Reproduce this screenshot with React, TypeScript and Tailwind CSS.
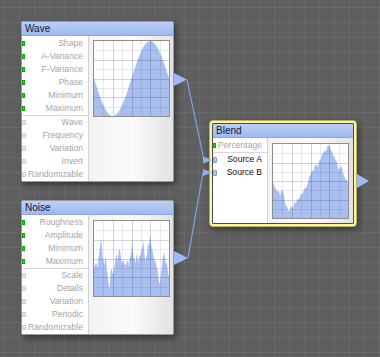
import React from "react";

type Pt = [number, number];

function Chart({ pts, h = 77 }: { pts: Pt[]; h?: number }) {
  const W = 75;
  const H = h - 2;
  const d =
    `M0,${H} ` +
    pts.map(([x, y]) => `L${(x * W).toFixed(2)},${(y * H).toFixed(2)}`).join(" ") +
    ` L${W},${H} Z`;
  const lines: React.ReactNode[] = [];
  for (let i = 1; i < 8; i++) {
    const major = i % 2 === 0;
    const c = major ? "rgba(40,50,80,0.22)" : "rgba(40,50,80,0.1)";
    const x = Math.round((i * W) / 8) + 0.5;
    const y = Math.round((i * H) / 8) + 0.5;
    lines.push(<line key={"v" + i} x1={x} y1={0} x2={x} y2={H} stroke={c} strokeWidth={1} />);
    lines.push(<line key={"h" + i} x1={0} y1={y} x2={W} y2={y} stroke={c} strokeWidth={1} />);
  }
  return (
    <div className="border border-[#8e8e8e] bg-white w-[77px]" style={{ height: h }}>
      <svg width={W} height={H} className="block">
        <path d={d} fill="#a9bff0" />
        {lines}
      </svg>
    </div>
  );
}

function Conn({ kind }: { kind: "green" | "gray" | "blue" }) {
  if (kind === "green")
    return <div className="w-[3px] h-[5px] bg-[#14d814] shadow-[inset_0_0_0_0.5px_#0a8a0a] shrink-0" />;
  if (kind === "blue")
    return <div className="w-[4px] h-[6px] rounded-[1px] bg-[#b9c8e4] border border-[#8899bb] shrink-0" />;
  return <div className="w-[4px] h-[5px] rounded-[1px] bg-[#f0f0f0] border border-[#c4c4c4] shrink-0" />;
}

function Row({ label, kind, dark }: { label: string; kind: "green" | "gray" | "blue"; dark?: boolean }) {
  return (
    <div className="h-[13px] flex items-center pr-[5px]">
      <Conn kind={kind} />
      <span className={"ml-auto text-[8.6px] leading-none " + (dark ? "text-[#111111]" : "text-[#a6a6a6]")}>
        {label}
      </span>
    </div>
  );
}

function Title({ text }: { text: string }) {
  return (
    <div className="h-[14px] flex items-center pl-[3px] bg-gradient-to-b from-[#bccff6] to-[#9fb8ef] border-b border-[#8fa6d8] text-[10px] leading-none text-[#0f1736]">
      {text}
    </div>
  );
}

function GenNode({
  title,
  g1,
  g2,
  pts,
  chartPad,
  cls,
}: {
  title: string;
  g1: string[];
  g2: string[];
  pts: Pt[];
  chartPad: string;
  cls: string;
}) {
  return (
    <div
      className={
        "absolute w-[153px] border border-[#9c9c9c] rounded-[2px] overflow-hidden bg-white shadow-[2px_3px_6px_rgba(0,0,0,0.45)] " +
        cls
      }
    >
      <Title text={title} />
      <div className="flex">
        <div className="w-[67px] border-r border-[#d2d2d2] bg-white">
          <div className="pt-[1px] border-b border-[#d8d8d8]">
            {g1.map((l) => (
              <Row key={l} label={l} kind="green" />
            ))}
          </div>
          <div>
            {g2.map((l) => (
              <Row key={l} label={l} kind="gray" />
            ))}
          </div>
        </div>
        <div className={"flex-1 pl-[4px] bg-gradient-to-r from-[#f3f3f3] via-[#fbfbfb] to-[#e2e2e2] " + chartPad}>
          <Chart pts={pts} />
        </div>
      </div>
    </div>
  );
}

const wavePts: Pt[] = Array.from({ length: 151 }, (_, i) => {
  const x = i / 150;
  return [x, 0.5 + 0.5 * Math.sin(2 * Math.PI * x)];
});

function fromZoom(arr: number[][], x0: number, w: number, y0: number, h: number, jitter: number): Pt[] {
  const out: Pt[] = [];
  let seed = 7;
  const rnd = () => {
    seed = (seed * 9301 + 49297) % 233280;
    return seed / 233280;
  };
  for (let i = 0; i < arr.length; i++) {
    const [zx, zy] = arr[i];
    out.push([(zx - x0) / w, Math.min(1, Math.max(0, (zy - y0) / h))]);
    if (i < arr.length - 1 && jitter > 0) {
      const [nx, ny] = arr[i + 1];
      const mx = (zx + nx) / 2;
      const my = (zy + ny) / 2 + (rnd() - 0.5) * jitter;
      out.push([(mx - x0) / w, Math.min(1, Math.max(0, (my - y0) / h))]);
    }
  }
  return out;
}

const noiseRaw = [
  [283, 215], [290, 200], [295, 215], [298, 180], [305, 130], [310, 185], [315, 210], [320, 190],
  [325, 240], [330, 285], [335, 220], [340, 235], [345, 215], [350, 180], [355, 200], [360, 160],
  [365, 180], [370, 205], [375, 200], [380, 210], [385, 195], [390, 215], [395, 180], [400, 130],
  [405, 190], [410, 205], [415, 170], [420, 195], [425, 180], [430, 160], [435, 135], [440, 200],
  [445, 180], [450, 145], [455, 115], [460, 160], [465, 180], [470, 195], [475, 215], [480, 240],
  [485, 265], [490, 220], [495, 185], [500, 180], [505, 200], [510, 230], [513, 235],
];
const noisePts = fromZoom(noiseRaw, 283, 230, 75, 227, 30);

const blendRaw = [
  [310, 215], [318, 240], [325, 245], [332, 260], [338, 240], [343, 255], [348, 290], [355, 300],
  [360, 305], [365, 290], [370, 300], [378, 280], [385, 270], [392, 265], [400, 255], [405, 240],
  [412, 235], [418, 215], [425, 195], [430, 180], [435, 185], [440, 165], [445, 170], [452, 150],
  [458, 140], [463, 130], [470, 120], [476, 110], [482, 105], [487, 115], [492, 125], [497, 140],
  [502, 150], [507, 160], [512, 180], [517, 170], [522, 175], [528, 200], [533, 210], [540, 220],
];
const blendPts = fromZoom(blendRaw, 310, 230, 100, 228, 14);

export default function App() {
  return (
    <div className="relative w-[380px] h-[357px] overflow-hidden bg-[#5f5f5f] bg-[linear-gradient(to_right,rgba(255,255,255,0.06)_1px,transparent_1px),linear-gradient(to_bottom,rgba(255,255,255,0.06)_1px,transparent_1px)] bg-[length:15px_15px] bg-[position:4px_7px] font-['Liberation_Sans',Arial,sans-serif]">
      <GenNode
        title="Wave"
        g1={["Shape", "A-Variance", "F-Variance", "Phase", "Minimum", "Maximum"]}
        g2={["Wave", "Frequency", "Variation", "Invert", "Randomizable"]}
        pts={wavePts}
        chartPad="pt-[4px]"
        cls="left-[21px] top-[21px]"
      />
      <GenNode
        title="Noise"
        g1={["Roughness", "Amplitude", "Minimum", "Maximum"]}
        g2={["Scale", "Details", "Variation", "Periodic", "Randomizable"]}
        pts={noisePts}
        chartPad="pt-[5px]"
        cls="left-[21px] top-[200px]"
      />

      {/* Blend (selected) */}
      <div className="absolute left-[209px] top-[120px] w-[148px] h-[107px] p-[2px] rounded-[4px] bg-[#fbf4a6] border border-[#b9b060] shadow-[2px_3px_6px_rgba(0,0,0,0.4)]">
        <div className="h-full border border-[#4c4c4c] rounded-[1px] overflow-hidden bg-white flex flex-col">
          <Title text="Blend" />
          <div className="flex flex-1">
            <div className="w-[55px] border-r border-[#d2d2d2] bg-white pt-[1px]">
              <div className="border-b border-[#d8d8d8]">
                <Row label="Percentage" kind="green" />
              </div>
              <Row label="Source A" kind="blue" dark />
              <Row label="Source B" kind="blue" dark />
            </div>
            <div className="flex-1 pl-[4px] pt-[5px] bg-gradient-to-r from-[#f3f3f3] via-[#fbfbfb] to-[#e2e2e2]">
              <Chart pts={blendPts} h={76} />
            </div>
          </div>
        </div>
      </div>

      {/* connections */}
      <svg className="absolute left-0 top-0 pointer-events-none" width={380} height={357}>
        <polygon points="174,73 187,79.5 174,86" fill="#9db8f3" />
        <polygon points="174,251 188,258 174,265" fill="#9db8f3" />
        <polygon points="357,174 369,181 357,188" fill="#9db8f3" />
        <line x1={187} y1={80} x2={204} y2={160} stroke="#7fa2f0" strokeWidth={1.2} />
        <line x1={188} y1={258} x2={203} y2={172.5} stroke="#7fa2f0" strokeWidth={1.2} />
        <polygon points="203,156.5 212,160 203,163.5" fill="#8fb0f2" />
        <polygon points="203,169 212,172.5 203,176" fill="#8fb0f2" />
      </svg>
    </div>
  );
}
